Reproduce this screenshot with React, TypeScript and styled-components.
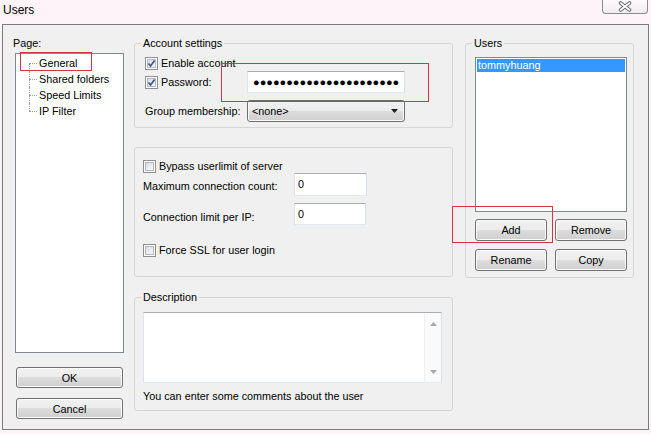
import React from 'react';
import styled, { createGlobalStyle } from 'styled-components';

const GlobalStyle = createGlobalStyle`
  html, body {
    margin: 0;
    padding: 0;
  }
  body {
    background: #fcf4f9;
    font-family: "Liberation Sans", Arial, sans-serif;
    font-size: 10.8px;
    color: #000;
  }
`;

const Screen = styled.div`
  width: 651px;
  height: 434px;
  display: flex;
  flex-direction: column;
  overflow: hidden;
`;

const TitleBar = styled.div`
  height: 24px;
  display: flex;
  justify-content: space-between;
  align-items: flex-start;
`;

const Title = styled.span`
  font-size: 12px;
  line-height: 20px;
  padding-left: 3px;
`;

const CloseButton = styled.div`
  width: 46px;
  height: 14px;
  margin-right: 3px;
  box-sizing: border-box;
  border: 1px solid #8d8a8c;
  border-top: none;
  border-radius: 0 0 4px 4px;
  background: linear-gradient(#fdfbfc, #f1ecef);
  display: flex;
  align-items: center;
  justify-content: center;
`;

const Dialog = styled.div`
  margin-left: 2px;
  width: 647px;
  height: 406px;
  box-sizing: border-box;
  border: 1px solid #7b7b7b;
  background: #f0f0f0;
  padding: 12px 0 0 10px;
  display: grid;
  grid-template-columns: 111px 319px 171px;
  column-gap: 10px;
  align-items: start;
`;

const Column = styled.div<{ $shift?: number }>`
  display: flex;
  flex-direction: column;
  margin-left: ${(p) => p.$shift ?? 0}px;
`;

const Caption = styled.div`
  line-height: 13px;
  height: 13px;
`;

const TreeBox = styled.div`
  margin: 3px 0 0 2px;
  width: 109px;
  height: 300px;
  box-sizing: border-box;
  border: 1px solid #828790;
  background: #fff;
  padding: 1px 0 0;
`;

const TreeList = styled.ul`
  list-style: none;
  margin: 0;
  padding: 0;
`;

const TreeItem = styled.li`
  position: relative;
  height: 16px;
  line-height: 16px;
  padding-left: 23px;
  white-space: nowrap;

  &::before {
    content: '';
    position: absolute;
    left: 13px;
    top: 8px;
    width: 8px;
    border-top: 1px dotted #9a9a9a;
  }

  &::after {
    content: '';
    position: absolute;
    left: 13px;
    top: 0;
    bottom: 0;
    border-left: 1px dotted #9a9a9a;
  }

  &:first-child::after {
    top: 8px;
  }

  &:last-child::after {
    bottom: 8px;
  }
`;

const Annotation = styled.span<{ $l: number; $t: number; $w: number; $h: number }>`
  position: absolute;
  left: ${(p) => p.$l}px;
  top: ${(p) => p.$t}px;
  width: ${(p) => p.$w}px;
  height: ${(p) => p.$h}px;
  box-sizing: border-box;
  border: 1px solid #d0364b;
  pointer-events: none;
  z-index: 2;
`;

const PushButton = styled.div<{ $w: number; $h?: number; $mt?: number; $ml?: number }>`
  position: relative;
  width: ${(p) => p.$w}px;
  height: ${(p) => p.$h ?? 22}px;
  margin-top: ${(p) => p.$mt ?? 0}px;
  margin-left: ${(p) => p.$ml ?? 0}px;
  box-sizing: border-box;
  border: 1px solid #707070;
  border-radius: 3px;
  background: linear-gradient(#f2f2f2 0%, #ebebeb 50%, #dddddd 50%, #cfcfcf 100%);
  box-shadow: inset 0 0 0 1px #fbfbfb;
  display: flex;
  align-items: center;
  justify-content: center;
  flex: none;
`;

const Group = styled.fieldset<{ $pt: number; $pl: number; $pb: number; $mt?: number }>`
  margin: ${(p) => p.$mt ?? 0}px 0 0;
  padding: ${(p) => p.$pt}px 0 ${(p) => p.$pb}px ${(p) => p.$pl}px;
  border: 1px solid #d5d5d5;
  border-radius: 3px;
  min-width: 0;
`;

const Legend = styled.legend<{ $shift: number }>`
  line-height: 13px;
  padding: 0 2px;
  margin-left: ${(p) => p.$shift}px;
`;

const Stack = styled.div`
  display: flex;
  flex-direction: column;
`;

const Row = styled.div<{ $h: number; $mt?: number }>`
  display: flex;
  align-items: center;
  height: ${(p) => p.$h}px;
  margin-top: ${(p) => p.$mt ?? 0}px;
  white-space: nowrap;
`;

const FieldLabel = styled.div<{ $w: number; $drop?: number }>`
  width: ${(p) => p.$w}px;
  flex: none;
  display: flex;
  align-items: center;
  padding-top: ${(p) => p.$drop ?? 0}px;
`;

const CheckRow = styled.label`
  display: flex;
  align-items: center;
  gap: 3px;
`;

const CheckBox = styled.span`
  width: 13px;
  height: 13px;
  box-sizing: border-box;
  border: 1px solid #8e8f8f;
  background: linear-gradient(135deg, #cfd3d9 0%, #eceef0 55%, #fbfbfb 100%);
  box-shadow: inset 0 0 0 1px #fff, inset 0 0 0 2px #b4b8be;
  display: flex;
  align-items: center;
  justify-content: center;
  flex: none;
`;

const TextBox = styled.div<{ $w: number; $h: number }>`
  position: relative;
  width: ${(p) => p.$w}px;
  height: ${(p) => p.$h}px;
  box-sizing: border-box;
  border: 1px solid;
  border-color: #abadb3 #dbdfe6 #e3e9ef #e2e3ea;
  background: #fff;
  padding: 3px 3px 0;
  line-height: 14px;
  flex: none;
`;

const Secret = styled.div`
  white-space: nowrap;
  font-size: 11px;
  letter-spacing: 0;
  line-height: 15px;
  padding-left: 2px;
`;

const Combo = styled.div`
  width: 158px;
  height: 22px;
  box-sizing: border-box;
  border: 1px solid #707070;
  border-radius: 3px;
  background: linear-gradient(#f2f2f2 0%, #ebebeb 50%, #dddddd 50%, #cfcfcf 100%);
  box-shadow: inset 0 0 0 1px #fbfbfb;
  display: flex;
  align-items: center;
  justify-content: space-between;
  padding: 0 6px 0 4px;
`;

const Memo = styled.div`
  width: 299px;
  height: 71px;
  box-sizing: border-box;
  border: 1px solid;
  border-color: #abadb3 #dbdfe6 #e3e9ef #e2e3ea;
  background: #fff;
  display: flex;
  justify-content: flex-end;
`;

const ScrollBar = styled.div`
  width: 16px;
  background: #fafafa;
  border-left: 1px solid #efefef;
  display: flex;
  flex-direction: column;
  justify-content: space-between;
  align-items: center;
  padding: 9px 0 8px;
`;

const Hint = styled.div`
  margin-top: 7px;
  line-height: 13px;
`;

const ListBox = styled.div`
  width: 152px;
  height: 155px;
  box-sizing: border-box;
  border: 1px solid #828790;
  background: #fff;
  padding: 1px;
`;

const ListItem = styled.div<{ $selected?: boolean }>`
  height: 13px;
  line-height: 13px;
  padding-left: 1px;
  background: ${(p) => (p.$selected ? '#3399ff' : 'transparent')};
  color: ${(p) => (p.$selected ? '#fff' : '#000')};
`;

const ButtonRow = styled.div<{ $mt: number }>`
  display: flex;
  gap: 8px;
  margin-top: ${(p) => p.$mt}px;
`;

function Check({ checked, children }: { checked?: boolean; children: React.ReactNode }) {
  return (
    <CheckRow>
      <CheckBox>
        {checked && (
          <svg width="9" height="9" viewBox="0 0 9 9">
            <path d="M1.5 4.5 L3.6 7 L7.6 1.6" fill="none" stroke="#3d5386" strokeWidth="1.7" />
          </svg>
        )}
      </CheckBox>
      {children}
    </CheckRow>
  );
}

const pages = ['General', 'Shared folders', 'Speed Limits', 'IP Filter'];

export default function App() {
  return (
    <Screen>
      <GlobalStyle />
      <TitleBar>
        <Title>Users</Title>
        <CloseButton>
          <svg width="14" height="11" viewBox="0 0 14 11">
            <path d="M2.5 2 L11.5 9 M11.5 2 L2.5 9" stroke="#6b6b6b" strokeWidth="3.6" strokeLinecap="round" />
            <path d="M2.5 2 L11.5 9 M11.5 2 L2.5 9" stroke="#fff" strokeWidth="1.6" strokeLinecap="round" />
          </svg>
        </CloseButton>
      </TitleBar>

      <Dialog>
        <Column>
          <Caption>Page:</Caption>
          <TreeBox>
            <TreeList>
              {pages.map((p, i) => (
                <TreeItem key={p}>
                  {p}
                  {i === 0 && <Annotation $l={4} $t={-3} $w={72} $h={19} />}
                </TreeItem>
              ))}
            </TreeList>
          </TreeBox>
          <PushButton $w={107} $h={21} $mt={14} $ml={3}>OK</PushButton>
          <PushButton $w={107} $h={21} $mt={10} $ml={3}>Cancel</PushButton>
        </Column>

        <Column>
          <Group $pt={6} $pl={10} $pb={5}>
            <Legend $shift={-4}>Account settings</Legend>
            <Stack>
              <Row $h={14}>
                <Check checked>Enable account</Check>
              </Row>
              <Row $h={22} $mt={1}>
                <FieldLabel $w={102}>
                  <Check checked>Password:</Check>
                </FieldLabel>
                <TextBox $w={158} $h={22}>
                  <Secret>{'●'.repeat(22)}</Secret>
                  <Annotation $l={-27} $t={-9} $w={208} $h={39} />
                </TextBox>
              </Row>
              <Row $h={22} $mt={7}>
                <FieldLabel $w={102}>Group membership:</FieldLabel>
                <Combo>
                  <span>&lt;none&gt;</span>
                  <svg width="7" height="4" viewBox="0 0 7 4">
                    <path d="M0 0 H7 L3.5 4 Z" fill="#1a1a1a" />
                  </svg>
                </Combo>
              </Row>
            </Stack>
          </Group>

          <Group $pt={11} $pl={8} $pb={19} $mt={19}>
            <Stack>
              <Row $h={14}>
                <Check>Bypass userlimit of server</Check>
              </Row>
              <Row $h={23}>
                <FieldLabel $w={151} $drop={2}>Maximum connection count:</FieldLabel>
                <TextBox $w={73} $h={23}>0</TextBox>
              </Row>
              <Row $h={22} $mt={7}>
                <FieldLabel $w={151} $drop={6}>Connection limit per IP:</FieldLabel>
                <TextBox $w={72} $h={22}>0</TextBox>
              </Row>
              <Row $h={14} $mt={18}>
                <Check>Force SSL for user login</Check>
              </Row>
            </Stack>
          </Group>

          <Group $pt={8} $pl={8} $pb={7} $mt={14}>
            <Legend $shift={-2}>Description</Legend>
            <Memo>
              <ScrollBar>
                <svg width="7" height="4" viewBox="0 0 7 4">
                  <path d="M0 4 H7 L3.5 0 Z" fill="#a8a8a8" />
                </svg>
                <svg width="7" height="4" viewBox="0 0 7 4">
                  <path d="M0 0 H7 L3.5 4 Z" fill="#a8a8a8" />
                </svg>
              </ScrollBar>
            </Memo>
            <Hint>You can enter some comments about the user</Hint>
          </Group>
        </Column>

        <Column $shift={2}>
          <Group $pt={7} $pl={9} $pb={6}>
            <Legend $shift={-3}>Users</Legend>
            <ListBox>
              <ListItem $selected>tommyhuang</ListItem>
            </ListBox>
            <ButtonRow $mt={7}>
              <PushButton $w={72}>
                Add
                <Annotation $l={-24} $t={-14} $w={101} $h={37} />
              </PushButton>
              <PushButton $w={72}>Remove</PushButton>
            </ButtonRow>
            <ButtonRow $mt={8}>
              <PushButton $w={72}>Rename</PushButton>
              <PushButton $w={72}>Copy</PushButton>
            </ButtonRow>
          </Group>
        </Column>
      </Dialog>
    </Screen>
  );
}
